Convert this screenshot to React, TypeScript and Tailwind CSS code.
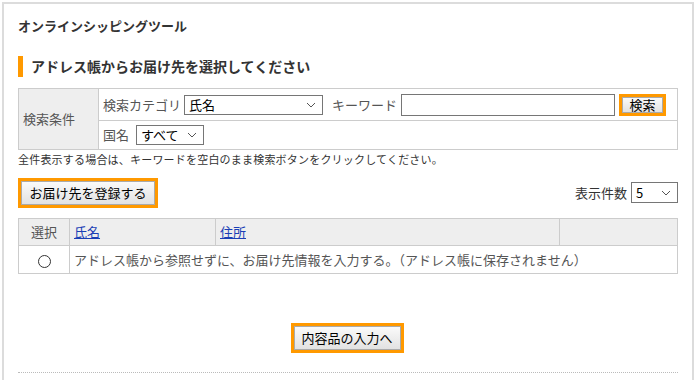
import React from 'react';

const font = { fontFamily: '"Noto Sans CJK JP", "Noto Sans", sans-serif' };

function Chevron() {
  return (
    <svg width="10" height="6" viewBox="0 0 10 6" className="shrink-0">
      <path d="M1 1 L5 5 L9 1" fill="none" stroke="#555" strokeWidth="1" />
    </svg>
  );
}

function Select({ value, className }: { value: string; className: string }) {
  return (
    <div className={`flex items-center justify-between border border-[#767676] bg-white pl-[4px] pr-[6px] text-[13px] text-black ${className}`}>
      <span>{value}</span>
      <Chevron />
    </div>
  );
}

function OrangeButton({ label, className }: { label: string; className: string }) {
  return (
    <div className={`border-[3px] border-[#ff9900] ${className}`}>
      <div className="flex h-full items-center justify-center border border-[#aaa] bg-gradient-to-b from-[#fafafa] to-[#e2e2e2] text-black">
        {label}
      </div>
    </div>
  );
}

export default function App() {
  return (
    <div className="h-[380px] w-[698px] overflow-hidden bg-white pl-[2px] pt-[2px] text-[#333]" style={font}>
      <div className="h-[400px] w-[692px] border-l-2 border-r-2 border-t-2 border-[#dcdcdc] px-[14px]">
        <h1 className="pt-[12px] text-[13px] font-bold leading-[20px]">オンラインシッピングツール</h1>

        <div className="mt-[20px] flex h-[21px] items-center border-l-[5px] border-[#ff9900] pl-[8px]">
          <h2 className="text-[14px] font-bold">アドレス帳からお届け先を選択してください</h2>
        </div>

        <table className="mt-[11px] w-[660px] border-collapse text-[13px]">
          <tbody>
            <tr className="h-[32px]">
              <td rowSpan={2} className="w-[80px] border border-[#ccc] bg-[#eeeeee] pl-[4px] text-[#555]">検索条件</td>
              <td className="border border-[#ccc] pl-[4px]">
                <div className="flex items-center">
                  <span className="text-[#555]">検索カテゴリ</span>
                  <Select value="氏名" className="ml-[3px] h-[20px] w-[139px]" />
                  <span className="ml-[9px] text-[#555]">キーワード</span>
                  <div className="ml-[4px] h-[22px] w-[214px] border border-[#767676]" />
                  <OrangeButton label="検索" className="ml-[4px] h-[22px] w-[47px] text-[13px]" />
                </div>
              </td>
            </tr>
            <tr className="h-[29px]">
              <td className="border border-[#ccc] pl-[4px]">
                <div className="flex items-center">
                  <span className="text-[#555]">国名</span>
                  <Select value="すべて" className="ml-[7px] h-[20px] w-[68px]" />
                </div>
              </td>
            </tr>
          </tbody>
        </table>

        <p className="mt-[2px] text-[11px] leading-[14px] tracking-[0.2px]">全件表示する場合は、キーワードを空白のまま検索ボタンをクリックしてください。</p>

        <div className="mt-[12px] flex items-end justify-between">
          <OrangeButton label="お届け先を登録する" className="h-[30px] w-[140px] text-[13px]" />
          <div className="mb-[5px] flex items-center text-[13px]">
            <span>表示件数</span>
            <Select value="5" className="ml-[4px] h-[21px] w-[47px]" />
          </div>
        </div>

        <table className="mt-[10px] w-[660px] border-collapse text-[13px]">
          <thead>
            <tr className="h-[27px] bg-[#eeeeee]">
              <th className="w-[51px] border border-[#ccc] font-normal text-[#555]">選択</th>
              <th className="w-[146px] border border-[#ccc] pl-[4px] text-left font-normal">
                <span className="text-[#1a3fb5] underline">氏名</span>
              </th>
              <th className="w-[344px] border border-[#ccc] pl-[4px] text-left font-normal">
                <span className="text-[#1a3fb5] underline">住所</span>
              </th>
              <th className="border border-[#ccc]" />
            </tr>
          </thead>
          <tbody>
            <tr className="h-[28px]">
              <td className="border border-[#ccc] text-center">
                <span className="inline-block h-[13px] w-[13px] rounded-full border border-[#333] align-middle" />
              </td>
              <td colSpan={3} className="border border-[#ccc] pl-[4px] text-[#555]">
                アドレス帳から参照せずに、お届け先情報を入力する。（アドレス帳に保存されません）
              </td>
            </tr>
          </tbody>
        </table>

        <div className="mt-[49px] flex justify-center">
          <OrangeButton label="内容品の入力へ" className="ml-[-2px] h-[30px] w-[113px] text-[13px]" />
        </div>

        <div className="mt-[19px] w-[660px] border-t border-dotted border-[#bbb]" />
      </div>
    </div>
  );
}
